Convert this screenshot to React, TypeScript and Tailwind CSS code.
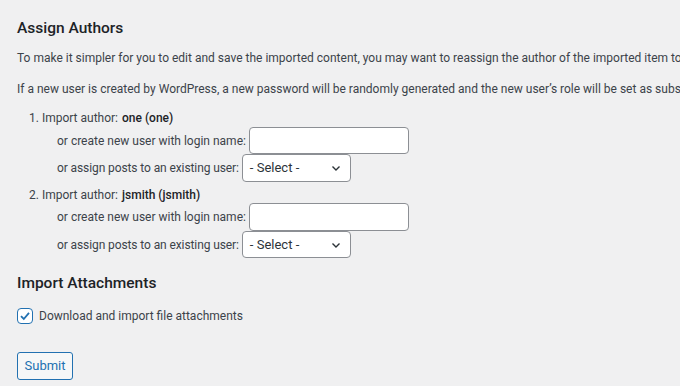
import React from "react";

const font = { fontFamily: 'Roboto, "Liberation Sans", sans-serif' };

function Chevron() {
  return (
    <svg width="10" height="10" viewBox="0 0 10 10" className="text-[#2c3338]">
      <path d="M1.5 3.5 L5 7 L8.5 3.5" fill="none" stroke="currentColor" strokeWidth="1.4" />
    </svg>
  );
}

function AuthorBlock({ n, name, first }: { n: number; name: string; first?: boolean }) {
  return (
    <div>
      <div className={first ? "h-[19px] flex items-center pl-[12px]" : "h-[21px] flex items-center pt-1 pl-[12px]"}>
        <span>{n}. Import author:</span>
        <strong className="font-medium text-[#1d2327] ml-1">{name}</strong>
      </div>
      <div className={"flex items-center pl-[40px] " + (first ? "h-[27px]" : "h-[28px]")}>
        <span>or create new user with login name:</span>
        <div className="ml-[3px] w-[160px] h-full bg-white border border-[#8c8f94] rounded-[4px]" />
      </div>
      <div className={"flex items-center pl-[40px] " + (first ? "h-[28px]" : "h-[27px]")}>
        <span className="tracking-[-0.1px]">or assign posts to an existing user:</span>
        <div className="ml-[3px] w-[109px] h-full bg-white border border-[#8c8f94] rounded-[4px] flex items-center justify-between pl-[7px] pr-[9px] text-[13px] text-[#2c3338]">
          <span>- Select -</span>
          <Chevron />
        </div>
      </div>
    </div>
  );
}

export default function App() {
  return (
    <div
      className="w-[680px] h-[386px] overflow-hidden bg-[#f0f0f1] text-[#3c434a] text-[12px] whitespace-nowrap pl-[17px] pt-[16px]"
      style={font}
    >
      <h3 className="h-6 leading-6 text-[15.5px] font-medium text-[#1d2327]">Assign Authors</h3>
      <p className="mt-2 h-5 leading-5">
        To make it simpler for you to edit and save the imported content, you may want to reassign the author of the imported item to an existing user of this site.
      </p>
      <p className="mt-[11px] h-5 leading-5">
        If a new user is created by WordPress, a new password will be randomly generated and the new user’s role will be set as subscriber.
      </p>
      <div className="mt-[9px]">
        <AuthorBlock n={1} name="one (one)" first />
        <AuthorBlock n={2} name="jsmith (jsmith)" />
      </div>
      <h3 className="mt-[13px] h-6 leading-6 text-[15.5px] font-medium text-[#1d2327]">Import Attachments</h3>
      <label className="mt-[13px] h-4 flex items-center">
        <span className="w-4 h-4 border border-[#2271b1] rounded-[4px] bg-white flex items-center justify-center">
          <svg width="14" height="14" viewBox="0 0 14 14">
            <path d="M3 7.2 L5.8 10 L11 3.8" fill="none" stroke="#2271b1" strokeWidth="1.8" />
          </svg>
        </span>
        <span className="ml-[6px]">Download and import file attachments</span>
      </label>
      <button className="mt-[28px] h-7 w-[56px] border border-[#2271b1] rounded-[3px] bg-[#f6f7f7] text-[#2271b1] text-[13px]">
        Submit
      </button>
    </div>
  );
}
